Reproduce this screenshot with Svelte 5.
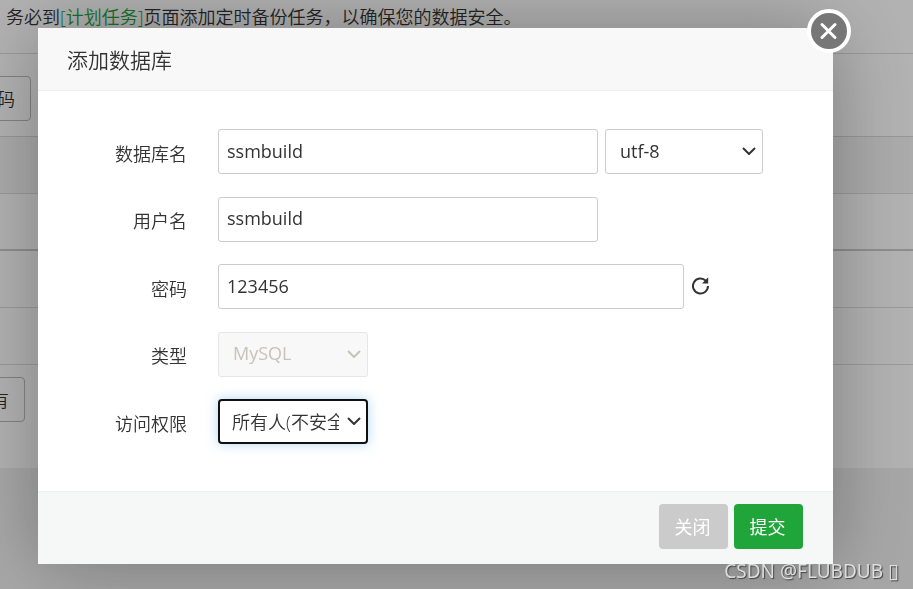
<script>
    let dbName = 'ssmbuild';
    let username = 'ssmbuild';
    let password = '123456';
    let charset = 'utf-8';
    let dbType = 'MySQL';
    let access = 'all';
    let visible = true;

    const rows = ['head', 'thick', '', ''];

    function randomPassword() {
        password = Math.random().toString(36).slice(2, 12);
    }

    function close() {
        visible = false;
    }
</script>

<div class="page">
    <p class="notice">务必到<a href="#cron">[计划任务]</a>页面添加定时备份任务，以确保您的数据安全。</p>
    <div class="toolbar">
        <button class="page-button root-button">码</button>
    </div>
    <div class="list">
        {#each rows as row}
            <div class="list-row {row}"></div>
        {/each}
    </div>
    <div class="pager">
        <button class="page-button all-button">有</button>
    </div>
</div>

{#if visible}
    <div class="mask">
        <form class="modal" on:submit|preventDefault={close}>
            <h1>添加数据库</h1>
            <button type="button" class="close" aria-label="关闭窗口" on:click={close}>
                <svg viewBox="0 0 44 44" width="44" height="44">
                    <circle cx="22" cy="22" r="20" fill="#777" stroke="#fff" stroke-width="4" />
                    <path d="M15 15.500L28 28.500M28 15.500L15 28.500" stroke="#fff" stroke-width="3" stroke-linecap="round" />
                </svg>
            </button>

            <div class="fields">
                <div class="row">
                    <label for="db-name">数据库名</label>
                    <input id="db-name" class="medium" type="text" bind:value={dbName} />
                    <div class="select charset">
                        <select aria-label="编码" bind:value={charset}>
                            <option value="utf-8">utf-8</option>
                        </select>
                        <svg viewBox="0 0 14 8" width="14" height="8"><path d="M1 1L7 7L13 1" /></svg>
                    </div>
                </div>
                <div class="row">
                    <label for="username">用户名</label>
                    <input id="username" class="medium" type="text" bind:value={username} />
                </div>
                <div class="row">
                    <label for="password">密码</label>
                    <input id="password" class="long" type="text" bind:value={password} />
                    <button type="button" class="refresh" aria-label="随机密码" on:click={randomPassword}>
                        <svg viewBox="0 0 18 18" width="18" height="18">
                            <path d="M17 9A7.500 7.500 0 1 1 14.800 3.700" fill="none" stroke="#333" stroke-width="2" />
                            <path d="M17.200 .2V6.500H11Z" fill="#333" />
                        </svg>
                    </button>
                </div>
                <div class="row">
                    <label for="db-type">类型</label>
                    <div class="select">
                        <select id="db-type" bind:value={dbType} disabled>
                            <option value="MySQL">MySQL</option>
                        </select>
                        <svg class="muted" viewBox="0 0 14 8" width="14" height="8"><path d="M1 1L7 7L13 1" /></svg>
                    </div>
                </div>
                <div class="row">
                    <label for="access">访问权限</label>
                    <div class="select">
                        <select id="access" class="active" bind:value={access}>
                            <option value="all">所有人(不安全)</option>
                        </select>
                        <svg viewBox="0 0 14 8" width="14" height="8"><path d="M1 1L7 7L13 1" /></svg>
                    </div>
                </div>
            </div>

            <div class="footer">
                <button type="button" class="action cancel" on:click={close}>关闭</button>
                <button type="submit" class="action submit">提交</button>
            </div>
        </form>
    </div>
{/if}

<div class="watermark">CSDN @FLUBDUB <span>▯</span></div>

<style>
    :global(body) {
        background-color: #f0f0f0;
        overflow: hidden;
    }

    .page,
    .modal,
    .modal input,
    .modal select,
    button {
        font-family: "Open Sans", "Noto Sans CJK SC", sans-serif;
        font-size: 18px;
        font-weight: 350;
        color: #333;
    }

    .page {
        background-color: #fff;
        overflow: hidden;
    }

    .notice {
        margin: 0;
        padding: 3px 6px 22px;
        line-height: 28px;
        border-bottom: 1px solid #ddd;
        white-space: nowrap;
    }

    .notice a {
        color: #20a53a;
        text-decoration: none;
    }

    .toolbar {
        display: flex;
        padding: 22px 0 15px;
        border-bottom: 1px solid #d8d8d8;
    }

    .page-button {
        height: 45px;
        padding: 0 15px 2px;
        background-color: #fff;
        border: 1px solid #bbb;
        border-radius: 4px;
    }

    .root-button {
        margin-left: -19px;
    }

    .all-button {
        margin-left: -25px;
    }

    .list-row {
        height: 56px;
        border-bottom: 1px solid #ddd;
    }

    .list-row.head {
        background-color: #f5f5f5;
    }

    .list-row.thick {
        height: 55px;
        border-bottom: 2px solid #ccc;
    }

    .pager {
        display: flex;
        padding: 12px 0 46px;
    }

    .mask {
        position: fixed;
        inset: 0;
        display: flex;
        padding: 28px 80px 25px 38px;
        background-color: rgba(0, 0, 0, 0.3);
    }

    .modal {
        position: relative;
        flex: 1;
        display: flex;
        flex-direction: column;
        background-color: #fff;
        box-shadow: 1px 1px 75px rgba(0, 0, 0, 0.3);
    }

    h1 {
        margin: 0;
        padding: 2px 29px 0;
        line-height: 60px;
        font-size: 21px;
        font-weight: 350;
        background-color: #f8f8f8;
        border-bottom: 1px solid #eee;
    }

    .close {
        position: absolute;
        top: -19px;
        right: -18px;
        padding: 0;
        background: none;
        border: none;
        cursor: pointer;
    }

    .close svg,
    .refresh svg {
        display: block;
    }

    .fields {
        flex: 1;
        display: flex;
        flex-direction: column;
        justify-content: space-between;
        padding: 38px 0 47px;
    }

    .row {
        display: flex;
        align-items: center;
        gap: 7px;
    }

    label {
        width: 149px;
        margin-right: 24px;
        padding-top: 2px;
        text-align: right;
    }

    .modal input,
    .modal select {
        box-sizing: border-box;
        height: 45px;
        background-color: #fff;
        border: 1px solid #ccc;
        border-radius: 3px;
        outline: none;
        font-weight: 400;
    }

    .modal input {
        padding: 0 8px 2px;
    }

    .medium {
        width: 380px;
    }

    .long {
        width: 466px;
    }

    .select {
        position: relative;
        width: 150px;
    }

    .select.charset {
        width: 158px;
    }

    .modal select {
        display: block;
        width: 100%;
        padding: 0 27px 2px 14px;
        appearance: none;
    }

    .modal select:disabled {
        color: #c6c3b9;
        background-color: #f8f8f8;
        border-color: #e6e6e6;
        opacity: 1;
    }

    .modal select.active {
        padding: 0 27px 0 12px;
        border: 2px solid #101010;
        border-radius: 4px;
        box-shadow: 0 0 12px rgba(102, 175, 233, 0.5);
        font-weight: 350;
    }

    .select svg {
        position: absolute;
        top: 18px;
        right: 7px;
        fill: none;
        stroke: #333;
        stroke-width: 2;
        pointer-events: none;
    }

    .select svg.muted {
        stroke: #c6c3b9;
    }

    .refresh {
        padding: 0 0 2px;
        background: none;
        border: none;
        cursor: pointer;
    }

    .footer {
        display: flex;
        justify-content: flex-end;
        gap: 6px;
        padding: 12px 30px 15px;
        background-color: #f6f8f7;
        border-top: 1px solid #edf1f0;
    }

    .action {
        width: 69px;
        height: 45px;
        padding: 0 2px 2px 0;
        border: none;
        border-radius: 4px;
        color: #fff;
        font-weight: 400;
        cursor: pointer;
    }

    .cancel {
        background-color: #cbcbcb;
    }

    .submit {
        background-color: #20a53a;
    }

    .watermark {
        position: fixed;
        right: 14px;
        bottom: 4px;
        font-family: "Noto Sans", sans-serif;
        font-size: 19px;
        line-height: 28px;
        color: #ddd;
        text-shadow: 1px 1px 1px #444;
        pointer-events: none;
    }

    .watermark span {
        font-family: "DejaVu Sans", sans-serif;
        font-size: 20px;
    }
</style>
